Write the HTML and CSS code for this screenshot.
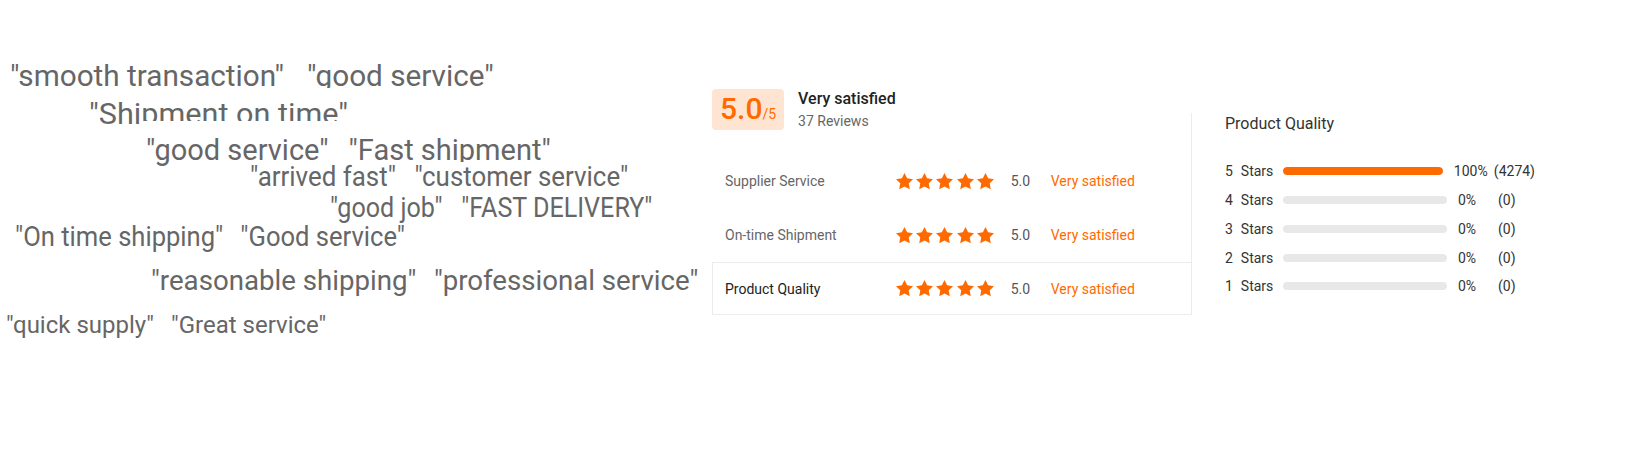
FILE: index.html
```html
<!DOCTYPE html>
<html lang="en">
<head>
<meta charset="utf-8">
<title>Reviews</title>
<link rel="stylesheet" href="styles.css">
</head>
<body>
<div class="page">
  <div class="cloud">
    <div class="phr r1"><span>"smooth transaction"</span><span>"good service"</span></div>
    <div class="phr r2"><span>"Shipment on time"</span></div>
    <div class="phr r3"><span>"good service"</span><span>"Fast shipment"</span></div>
    <div class="phr r4"><span>"arrived fast"</span><span>"customer service"</span></div>
    <div class="phr r5"><span>"good job"</span><span>"FAST DELIVERY"</span></div>
    <div class="phr r6"><span>"On time shipping"</span><span>"Good service"</span></div>
    <div class="phr r7"><span>"reasonable shipping"</span><span>"professional service"</span></div>
    <div class="phr r8"><span>"quick supply"</span><span>"Great service"</span></div>
  </div>

  <div class="review">
    <div class="left">
      <div class="summary">
        <div class="score"><span class="big">5.0</span><span class="of">/5</span></div>
        <div class="sum-text">
          <div class="sat">Very satisfied</div>
          <div class="reviews">37 Reviews</div>
        </div>
      </div>
      <div class="rows">
        <div class="row">
          <span class="label">Supplier Service</span>
          <span class="stars">
            <svg viewBox="2 2 20 20"><path d="M12 2l3.09 6.26L22 9.27l-5 4.87 1.18 6.88L12 17.77l-6.18 3.25L7 14.14 2 9.27l6.91-1.01z"/></svg>
            <svg viewBox="2 2 20 20"><path d="M12 2l3.09 6.26L22 9.27l-5 4.87 1.18 6.88L12 17.77l-6.18 3.25L7 14.14 2 9.27l6.91-1.01z"/></svg>
            <svg viewBox="2 2 20 20"><path d="M12 2l3.09 6.26L22 9.27l-5 4.87 1.18 6.88L12 17.77l-6.18 3.25L7 14.14 2 9.27l6.91-1.01z"/></svg>
            <svg viewBox="2 2 20 20"><path d="M12 2l3.09 6.26L22 9.27l-5 4.87 1.18 6.88L12 17.77l-6.18 3.25L7 14.14 2 9.27l6.91-1.01z"/></svg>
            <svg viewBox="2 2 20 20"><path d="M12 2l3.09 6.26L22 9.27l-5 4.87 1.18 6.88L12 17.77l-6.18 3.25L7 14.14 2 9.27l6.91-1.01z"/></svg>
          </span>
          <span class="num">5.0</span>
          <span class="verdict">Very satisfied</span>
        </div>
        <div class="row">
          <span class="label">On-time Shipment</span>
          <span class="stars">
            <svg viewBox="2 2 20 20"><path d="M12 2l3.09 6.26L22 9.27l-5 4.87 1.18 6.88L12 17.77l-6.18 3.25L7 14.14 2 9.27l6.91-1.01z"/></svg>
            <svg viewBox="2 2 20 20"><path d="M12 2l3.09 6.26L22 9.27l-5 4.87 1.18 6.88L12 17.77l-6.18 3.25L7 14.14 2 9.27l6.91-1.01z"/></svg>
            <svg viewBox="2 2 20 20"><path d="M12 2l3.09 6.26L22 9.27l-5 4.87 1.18 6.88L12 17.77l-6.18 3.25L7 14.14 2 9.27l6.91-1.01z"/></svg>
            <svg viewBox="2 2 20 20"><path d="M12 2l3.09 6.26L22 9.27l-5 4.87 1.18 6.88L12 17.77l-6.18 3.25L7 14.14 2 9.27l6.91-1.01z"/></svg>
            <svg viewBox="2 2 20 20"><path d="M12 2l3.09 6.26L22 9.27l-5 4.87 1.18 6.88L12 17.77l-6.18 3.25L7 14.14 2 9.27l6.91-1.01z"/></svg>
          </span>
          <span class="num">5.0</span>
          <span class="verdict">Very satisfied</span>
        </div>
        <div class="row active">
          <span class="label">Product Quality</span>
          <span class="stars">
            <svg viewBox="2 2 20 20"><path d="M12 2l3.09 6.26L22 9.27l-5 4.87 1.18 6.88L12 17.77l-6.18 3.25L7 14.14 2 9.27l6.91-1.01z"/></svg>
            <svg viewBox="2 2 20 20"><path d="M12 2l3.09 6.26L22 9.27l-5 4.87 1.18 6.88L12 17.77l-6.18 3.25L7 14.14 2 9.27l6.91-1.01z"/></svg>
            <svg viewBox="2 2 20 20"><path d="M12 2l3.09 6.26L22 9.27l-5 4.87 1.18 6.88L12 17.77l-6.18 3.25L7 14.14 2 9.27l6.91-1.01z"/></svg>
            <svg viewBox="2 2 20 20"><path d="M12 2l3.09 6.26L22 9.27l-5 4.87 1.18 6.88L12 17.77l-6.18 3.25L7 14.14 2 9.27l6.91-1.01z"/></svg>
            <svg viewBox="2 2 20 20"><path d="M12 2l3.09 6.26L22 9.27l-5 4.87 1.18 6.88L12 17.77l-6.18 3.25L7 14.14 2 9.27l6.91-1.01z"/></svg>
          </span>
          <span class="num">5.0</span>
          <span class="verdict">Very satisfied</span>
        </div>
      </div>
    </div>

    <div class="detail">
      <h3 class="detail-title">Product Quality</h3>
      <div class="dist-row">
        <span class="dist-label">5 Stars</span>
        <span class="bar"><span class="fill" style="width:100%"></span></span>
        <span class="pct">100%</span>
        <span class="cnt">(4274)</span>
      </div>
      <div class="dist-row">
        <span class="dist-label">4 Stars</span>
        <span class="bar"><span class="fill" style="width:0%"></span></span>
        <span class="pct">0%</span>
        <span class="cnt">(0)</span>
      </div>
      <div class="dist-row">
        <span class="dist-label">3 Stars</span>
        <span class="bar"><span class="fill" style="width:0%"></span></span>
        <span class="pct">0%</span>
        <span class="cnt">(0)</span>
      </div>
      <div class="dist-row">
        <span class="dist-label">2 Stars</span>
        <span class="bar"><span class="fill" style="width:0%"></span></span>
        <span class="pct">0%</span>
        <span class="cnt">(0)</span>
      </div>
      <div class="dist-row">
        <span class="dist-label">1 Stars</span>
        <span class="bar"><span class="fill" style="width:0%"></span></span>
        <span class="pct">0%</span>
        <span class="cnt">(0)</span>
      </div>
    </div>
  </div>
</div>
</body>
</html>
```

FILE: styles.css
```css
* { box-sizing: border-box; }

body {
  margin: 0;
  background: #fff;
  font-family: Roboto, "Liberation Sans", Arial, sans-serif;
}

.page {
  display: flex;
  width: 1651px;
  height: 468px;
}

/* ---------- word cloud (free canvas) ---------- */
.cloud {
  position: relative;
  flex: none;
  width: 712px;
  height: 468px;
}

.phr {
  position: absolute;
  display: flex;
  white-space: nowrap;
  background: #fff;
  color: #666;
  transform-origin: 0 0;
}

.r1 { left: 10px;  top: 60.75px; font-size: 30px; line-height: 30px; gap: 23px; transform: scaleX(0.99); }
.r2 { left: 89px;  top: 88px;    font-size: 30px; line-height: 52px; transform: scaleX(1.02); }
.r3 { left: 140px; top: 121px;   font-size: 29px; line-height: 58px; gap: 20px; padding-left: 6px; }
.r4 { left: 250px; top: 162px;   font-size: 28px; line-height: 29px; gap: 20px; transform: scaleX(0.925); }
.r5 { left: 330px; top: 195.3px; font-size: 27px; line-height: 27px; gap: 20px; transform: scaleX(0.93); }
.r6 { left: 15px;  top: 224.3px; font-size: 27px; line-height: 27px; gap: 18px; transform: scaleX(0.947); }
.r7 { left: 151px; top: 267.4px; font-size: 28px; line-height: 28px; gap: 18px; transform: scaleX(0.987); }
.r8 { left: 6px;   top: 312.8px; font-size: 24px; line-height: 24px; gap: 17px; }

/* ---------- review panel ---------- */
.review {
  display: flex;
  align-items: stretch;
  margin-top: 89px;
  height: 226px;
}

.left {
  width: 479px;
  flex: none;
  display: flex;
  flex-direction: column;
}

.summary {
  display: flex;
  align-items: flex-start;
  height: 41px;
}

.score {
  display: flex;
  align-items: baseline;
  height: 41px;
  padding: 5px 8px 0;
  background: #ffe4d2;
  border-radius: 4px;
  color: #ff6a00;
  font-weight: 500;
}

.score .big { font-size: 30px; line-height: 30px; }
.score .of  { font-size: 14px; line-height: 14px; font-weight: 400; }

.sum-text { margin-left: 14px; }

.sat {
  font-size: 16px;
  line-height: 20px;
  font-weight: 500;
  color: #222;
}

.reviews {
  margin-top: 2px;
  font-size: 14px;
  line-height: 20px;
  color: #666;
}

.rows { margin-top: 24px; }

.row {
  display: flex;
  align-items: center;
  height: 54px;
  padding-left: 12px;
  border: 1px solid transparent;
  border-right: 0;
  font-size: 14px;
  color: #666;
}

.row.active {
  height: 53px;
  border-color: #ececec;
  color: #222;
}

.label { width: 171px; flex: none; }

.stars {
  display: flex;
  gap: 3.2px;
}

.stars svg {
  display: block;
  width: 17px;
  height: 17px;
  fill: #ff6a00;
}

.num {
  margin-left: 17px;
  width: 40px;
  color: #555;
}

.verdict { color: #ff6a00; }

/* ---------- distribution ---------- */
.detail {
  width: 344px;
  flex: none;
  margin-top: 24px;
  padding-left: 33px;
  border-left: 1px solid #ececec;
}

.detail-title {
  margin: 0 0 22px;
  font-size: 16px;
  line-height: 22px;
  font-weight: 400;
  color: #333;
}

.dist-row {
  display: flex;
  align-items: center;
  height: 28.75px;
  font-size: 14px;
  color: #333;
}

.dist-label {
  width: 58px;
  flex: none;
  word-spacing: 4.5px;
}

.bar {
  flex: 1;
  height: 8px;
  border-radius: 4px;
  background: #e8e8e8;
  overflow: hidden;
}

.fill {
  display: block;
  height: 100%;
  background: #ff6a00;
  border-radius: 4px;
}

.pct {
  flex: none;
  width: 40px;
  margin-left: 11px;
}

.cnt {
  flex: none;
  min-width: 37px;
}
```
